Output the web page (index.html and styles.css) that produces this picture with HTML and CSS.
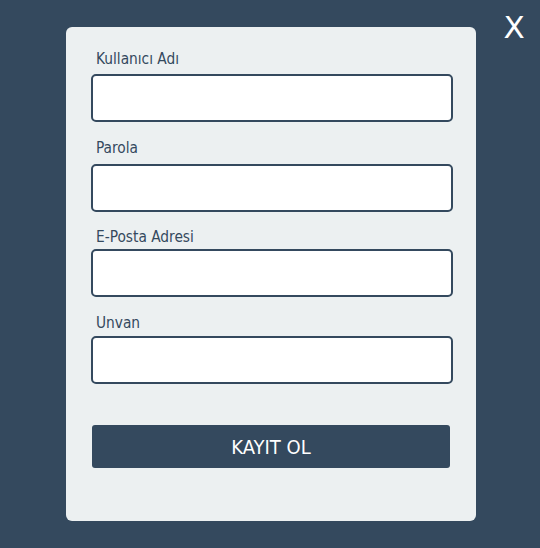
FILE: index.html
```html
<!DOCTYPE html>
<html lang="tr">
<head>
<meta charset="utf-8">
<link rel="stylesheet" href="styles.css">
</head>
<body>
<div class="page">
  <button class="close" type="button">X</button>
  <form class="card">
    <label class="label">Kullanıcı Adı</label>
    <input class="input" type="text">
    <label class="label l2">Parola</label>
    <input class="input i2" type="password">
    <label class="label l3">E-Posta Adresi</label>
    <input class="input i3" type="email">
    <label class="label l4">Unvan</label>
    <input class="input i4" type="text">
    <button class="submit" type="button">KAYIT OL</button>
  </form>
</div>
</body>
</html>
```
FILE: styles.css
```css
html, body {
  margin: 0;
  padding: 0;
  background: #34495e;
}
.page {
  width: 540px;
  height: 548px;
  box-sizing: border-box;
  padding: 27px 0 0 66px;
  position: relative;
  font-family: "DejaVu Sans Condensed", "DejaVu Sans", sans-serif;
}
.close {
  position: absolute;
  left: 500px;
  top: 10px;
  width: 28px;
  height: 34px;
  padding: 0;
  border: 0;
  background: none;
  color: #ffffff;
  font-family: "DejaVu Sans", sans-serif;
  font-size: 31px;
  line-height: 34px;
}
.card {
  width: 410px;
  box-sizing: border-box;
  height: 494px;
  margin: 0;
  background: #ecf0f1;
  border-radius: 6px;
  padding: 22px 23px 0 25px;
  display: flex;
  flex-direction: column;
}
.label {
  display: block;
  font-size: 15.3px;
  line-height: 18px;
  color: #34495e;
  padding-left: 5px;
  padding-top: 1px;
  margin-bottom: 6px;
}
.l2 { margin-top: 16px; margin-bottom: 7px; }
.l3 { margin-top: 15px; margin-bottom: 3px; }
.l4 { margin-top: 16px; margin-bottom: 4px; }
.input {
  display: block;
  box-sizing: border-box;
  width: 362px;
  height: 48px;
  margin: 0;
  border: 2px solid #34495e;
  border-radius: 5px;
  background: #ffffff;
}
.submit {
  margin: 41px 0 0 1px;
  width: 358px;
  height: 43px;
  border: 0;
  border-radius: 3px;
  background: #34495e;
  color: #ffffff;
  font-family: "DejaVu Sans Condensed", "DejaVu Sans", sans-serif;
  font-size: 20px;
  padding: 0;
}
```
